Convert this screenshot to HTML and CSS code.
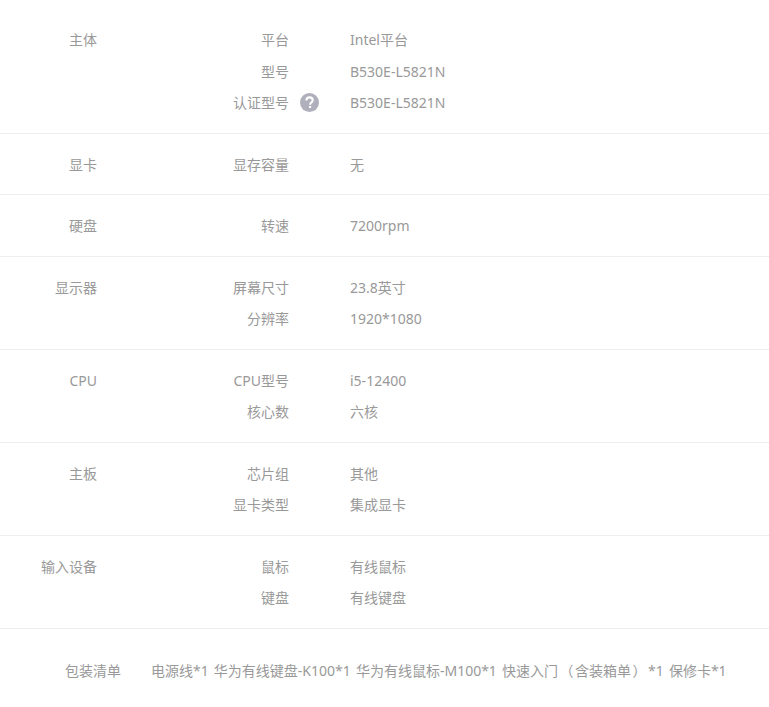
FILE: index.html
```html
<!DOCTYPE html>
<html lang="zh-CN">
<head>
<meta charset="utf-8">
<title>规格参数</title>
<link rel="stylesheet" href="styles.css">
</head>
<body>
<div class="specs">
  <section class="group">
    <h3 class="group-name">主体</h3>
    <dl class="rows">
      <div class="row"><dt>平台</dt><dd>Intel平台</dd></div>
      <div class="row"><dt>型号</dt><dd>B530E-L5821N</dd></div>
      <div class="row"><dt>认证型号<svg class="help" viewBox="0 0 20 20" aria-hidden="true"><circle cx="10" cy="10" r="10" fill="#b0b0bd"/><path d="M6.700 7.900c.1-2.100 1.500-3.300 3.400-3.300 1.900 0 3.300 1.200 3.300 2.900 0 1.300-.8 2-1.600 2.600-.8.600-1.100 1-1.100 1.900v.4" fill="none" stroke="#fff" stroke-width="2.200"/><rect x="9.500" y="13.600" width="2.200" height="2.200" fill="#fff"/></svg></dt><dd>B530E-L5821N</dd></div>
    </dl>
  </section>
  <section class="group">
    <h3 class="group-name">显卡</h3>
    <dl class="rows">
      <div class="row"><dt>显存容量</dt><dd>无</dd></div>
    </dl>
  </section>
  <section class="group">
    <h3 class="group-name">硬盘</h3>
    <dl class="rows">
      <div class="row"><dt>转速</dt><dd>7200rpm</dd></div>
    </dl>
  </section>
  <section class="group">
    <h3 class="group-name">显示器</h3>
    <dl class="rows">
      <div class="row"><dt>屏幕尺寸</dt><dd>23.8英寸</dd></div>
      <div class="row"><dt>分辨率</dt><dd>1920*1080</dd></div>
    </dl>
  </section>
  <section class="group">
    <h3 class="group-name">CPU</h3>
    <dl class="rows">
      <div class="row"><dt>CPU型号</dt><dd>i5-12400</dd></div>
      <div class="row"><dt>核心数</dt><dd>六核</dd></div>
    </dl>
  </section>
  <section class="group">
    <h3 class="group-name">主板</h3>
    <dl class="rows">
      <div class="row"><dt>芯片组</dt><dd>其他</dd></div>
      <div class="row"><dt>显卡类型</dt><dd>集成显卡</dd></div>
    </dl>
  </section>
  <section class="group">
    <h3 class="group-name">输入设备</h3>
    <dl class="rows">
      <div class="row"><dt>鼠标</dt><dd>有线鼠标</dd></div>
      <div class="row"><dt>键盘</dt><dd>有线键盘</dd></div>
    </dl>
  </section>
  <section class="package">
    <h3 class="package-name">包装清单</h3>
    <p class="package-items">电源线*1 华为有线键盘-K100*1 华为有线鼠标-M100*1 快速入门<span class="paren">（</span>含装箱单<span class="paren">）</span>*1 保修卡*1</p>
  </section>
</div>
</body>
</html>
```
FILE: styles.css
```css
* { box-sizing: border-box; }
html, body { margin: 0; padding: 0; background: #fff; }
body {
  font-family: "Noto Sans", "Noto Sans CJK SC", sans-serif;
  font-size: 14px;
  color: #999;
  overflow: hidden;
}
.specs { padding-top: 9.3px; }
.group {
  display: flex;
  padding: 15px 0 14px;
  border-bottom: 1px solid #eee;
}
.group-name {
  width: 97px;
  margin: 0;
  font: inherit;
  line-height: 31.5px;
  text-align: right;
}
.rows { margin: 0; flex: 1; }
.row { display: flex; height: 31.5px; line-height: 31.5px; }
dt {
  position: relative;
  width: 192px;
  text-align: right;
}
dd { margin: 0 0 0 61px; }
.help {
  position: absolute;
  left: 203px;
  top: 6px;
  width: 19px;
  height: 19px;
}
.package {
  display: flex;
  padding: 26px 0 27px;
  line-height: 31.5px;
}
.package-name {
  width: 121px;
  margin: 0;
  font: inherit;
  text-align: right;
}
.package-items {
  margin: 0 0 0 30px;
  white-space: nowrap;
  word-spacing: 1.5px;
}
.paren {
  display: inline-block;
  width: 17px;
  text-align: center;
}
```
